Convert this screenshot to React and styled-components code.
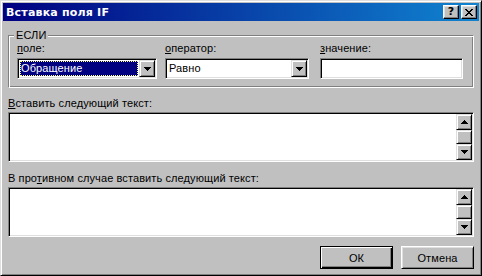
import React from "react";
import styled, { createGlobalStyle } from "styled-components";

const Global = createGlobalStyle`
  html, body { margin: 0; padding: 0; background: #c0c0c0; }
  body { font-family: "Liberation Sans", Arial, sans-serif; font-size: 11px; color: #000; letter-spacing: 0.1px; }
`;

const Window = styled.div`
  width: 482px;
  height: 276px;
  box-sizing: border-box;
  border: 1px solid;
  border-color: #dfdfdf #000 #000 #dfdfdf;
  box-shadow: inset 1px 1px #fff, inset -1px -1px #808080;
  padding: 2px;
  background: #c0c0c0;
  display: flex;
  flex-direction: column;
`;

const TitleBar = styled.div`
  height: 18px;
  display: flex;
  align-items: center;
  padding: 0 2px 0 3px;
  background: linear-gradient(to right, #000080, #1084d0);
`;

const TitleText = styled.div`
  flex: 1;
  color: #fff;
  font-weight: bold;
  font-family: "DejaVu Sans", "Liberation Sans", sans-serif;
  font-size: 11px;
  letter-spacing: 0.2px;
  white-space: nowrap;
`;

const CaptionButton = styled.div`
  width: 16px;
  height: 14px;
  box-sizing: border-box;
  border: 1px solid;
  border-color: #fff #000 #000 #fff;
  box-shadow: inset -1px -1px #808080, inset 1px 1px #dfdfdf;
  background: #c0c0c0;
  margin-left: ${(p) => (p.$gap ? "2px" : "0")};
  display: flex;
  align-items: center;
  justify-content: center;
  font-family: "DejaVu Sans", sans-serif;
  font-weight: bold;
  font-size: 11px;
  line-height: 12px;
`;

const Body = styled.div`
  flex: 1;
  display: flex;
  flex-direction: column;
  padding: 0 5px;
`;

const GroupBox = styled.div`
  position: relative;
  margin-top: 14px;
  height: 53px;
  box-sizing: border-box;
  border: 1px solid;
  border-color: #808080 #fff #fff #808080;
  box-shadow: inset 1px 1px #fff, inset -1px -1px #808080;
  padding: 6px 8px 0 8px;
  display: flex;
`;

const Legend = styled.div`
  position: absolute;
  top: -7px;
  left: 5px;
  padding: 0 2px;
  background: #c0c0c0;
  line-height: 13px;
`;

const Field = styled.div`
  display: flex;
  flex-direction: column;
  width: ${(p) => p.$w}px;
  margin-left: ${(p) => p.$ml || 0}px;
`;

const Label = styled.div`
  height: 13px;
  line-height: 13px;
  margin-top: ${(p) => p.$mt || 0}px;
  margin-bottom: ${(p) => p.$mb ?? 3}px;
  white-space: nowrap;
`;

const U = styled.span`
  text-decoration: underline;
  text-underline-offset: 1px;
`;

const Sunken = styled.div`
  box-sizing: border-box;
  border: 1px solid;
  border-color: #808080 #fff #fff #808080;
  box-shadow: inset 1px 1px #000, inset -1px -1px #dfdfdf;
  background: #fff;
  padding: 1px;
  display: flex;
`;

const Combo = styled(Sunken)`
  height: 21px;
`;

const Edit = styled(Sunken)`
  height: 21px;
  width: 143px;
`;

const ComboValue = styled.div`
  flex: 1;
  margin: 1px;
  height: 15px;
  line-height: 15px;
  padding-left: 1px;
  box-sizing: border-box;
  background: ${(p) => (p.$selected ? "#000080" : "#fff")};
  color: ${(p) => (p.$selected ? "#fff" : "#000")};
  outline: ${(p) => (p.$selected ? "1px dotted #ffff80" : "none")};
  outline-offset: -1px;
  white-space: nowrap;
  overflow: hidden;
`;

const RaisedBox = styled.div`
  box-sizing: border-box;
  width: 16px;
  height: ${(p) => p.$h || 16}px;
  border: 1px solid;
  border-color: #dfdfdf #000 #000 #dfdfdf;
  box-shadow: inset 1px 1px #fff, inset -1px -1px #808080;
  background: #c0c0c0;
  display: flex;
  align-items: center;
  justify-content: center;
  flex-shrink: 0;
`;

const TextArea = styled(Sunken)`
  height: 50px;
  justify-content: flex-end;
`;

const ScrollBar = styled.div`
  width: 16px;
  display: flex;
  flex-direction: column;
`;

const ButtonRow = styled.div`
  display: flex;
  justify-content: flex-end;
  gap: 8px;
  margin-top: 9px;
`;

const Button = styled.div`
  width: 73px;
  height: 23px;
  box-sizing: border-box;
  background: #c0c0c0;
  display: flex;
  align-items: center;
  justify-content: center;
  border: 1px solid;
  border-color: ${(p) => (p.$default ? "#000" : "#fff #000 #000 #fff")};
  box-shadow: ${(p) =>
    p.$default
      ? "inset 1px 1px #fff, inset -1px -1px #000, inset -2px -2px #808080"
      : "inset 1px 1px #dfdfdf, inset -1px -1px #808080"};
`;

const Arrow = ({ up }) => (
  <svg width="7" height="4" viewBox="0 0 7 4" shapeRendering="crispEdges">
    <path
      d={
        up
          ? "M3 0h1v1H3z M2 1h3v1H2z M1 2h5v1H1z M0 3h7v1H0z"
          : "M0 0h7v1H0z M1 1h5v1H1z M2 2h3v1H2z M3 3h1v1H3z"
      }
      fill="#000"
    />
  </svg>
);

const CloseGlyph = () => (
  <svg width="8" height="7" viewBox="0 0 8 7" shapeRendering="crispEdges">
    <path
      d="M0 0h2v1H0z M6 0h2v1H6z M1 1h2v1H1z M5 1h2v1H5z M2 2h4v1H2z M3 3h2v1H3z M2 4h4v1H2z M1 5h2v1H1z M5 5h2v1H5z M0 6h2v1H0z M6 6h2v1H6z"
      fill="#000"
    />
  </svg>
);

const ScrollTextArea = () => (
  <TextArea>
    <ScrollBar>
      <RaisedBox>
        <Arrow up />
      </RaisedBox>
      <RaisedBox $h={14} />
      <RaisedBox>
        <Arrow />
      </RaisedBox>
    </ScrollBar>
  </TextArea>
);

export default function App() {
  return (
    <>
      <Global />
      <Window>
        <TitleBar>
          <TitleText>Вставка поля IF</TitleText>
          <CaptionButton>?</CaptionButton>
          <CaptionButton $gap>
            <CloseGlyph />
          </CaptionButton>
        </TitleBar>
        <Body>
          <GroupBox>
            <Legend>ЕСЛИ</Legend>
            <Field $w={140}>
              <Label>
                <U>п</U>оле:
              </Label>
              <Combo>
                <ComboValue $selected>Обращение</ComboValue>
                <RaisedBox $h={17}>
                  <Arrow />
                </RaisedBox>
              </Combo>
            </Field>
            <Field $w={144} $ml={8}>
              <Label>
                <U>о</U>ператор:
              </Label>
              <Combo>
                <ComboValue>Равно</ComboValue>
                <RaisedBox $h={17}>
                  <Arrow />
                </RaisedBox>
              </Combo>
            </Field>
            <Field $w={143} $ml={11}>
              <Label>
                <U>з</U>начение:
              </Label>
              <Edit />
            </Field>
          </GroupBox>
          <Label $mt={9} $mb={2}>
            <U>В</U>ставить следующий текст:
          </Label>
          <ScrollTextArea />
          <Label $mt={10} $mb={2}>
            В про<U>т</U>ивном случае вставить следующий текст:
          </Label>
          <ScrollTextArea />
          <ButtonRow>
            <Button $default>ОК</Button>
            <Button>Отмена</Button>
          </ButtonRow>
        </Body>
      </Window>
    </>
  );
}
